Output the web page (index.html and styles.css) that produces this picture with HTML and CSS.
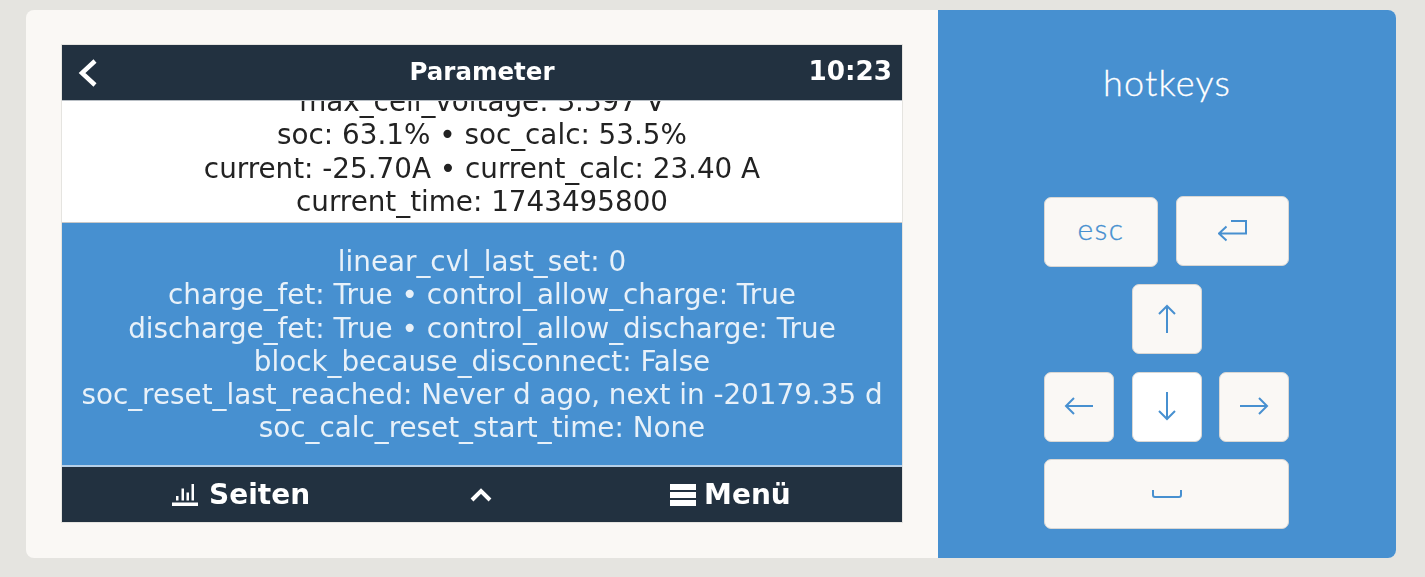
FILE: index.html
```html
<!DOCTYPE html>
<html lang="en">
<head>
    <meta charset="UTF-8">
    <meta name="viewport" content="width=device-width, initial-scale=1.0">
    <title>Remote console</title>
    <link rel="stylesheet" href="styles.css">
</head>
<body>
    <div class="card">
        <div class="console">
            <div class="screen">
                <div class="top-bar">
                    <svg class="back-icon" width="20" height="30" viewBox="0 0 20 30"><path d="M17 3 L4 15 L17 27" fill="none" stroke="#fff" stroke-width="4.500"/></svg>
                    <div class="top-title">Parameter</div>
                    <div class="top-time">10:23</div>
                </div>
                <div class="item">
                    <div>max_cell_voltage: 3.397 V</div>
                    <div>soc: 63.1% • soc_calc: 53.5%</div>
                    <div>current: -25.70A • current_calc: 23.40 A</div>
                    <div>current_time: 1743495800</div>
                </div>
                <div class="item-selected">
                    <div>linear_cvl_last_set: 0</div>
                    <div>charge_fet: True • control_allow_charge: True</div>
                    <div>discharge_fet: True • control_allow_discharge: True</div>
                    <div>block_because_disconnect: False</div>
                    <div>soc_reset_last_reached: Never d ago, next in -20179.35 d</div>
                    <div>soc_calc_reset_start_time: None</div>
                </div>
                <div class="bottom-bar">
                    <div class="nav-pages">
                        <svg width="26" height="24" viewBox="0 0 26 24"><path d="M0 19.500h26V23H0zM4 13h2.500v4.500H4zM9.500 5.500H12v12H9.500zM14.500 9.500H17v8h-2.500zM19.500 1H22v16.500h-2.500z" fill="#fff"/></svg>
                        <span>Seiten</span>
                    </div>
                    <svg class="nav-up" width="22" height="14" viewBox="0 0 22 14"><path d="M2 12 L11 3 L20 12" fill="none" stroke="#fff" stroke-width="4"/></svg>
                    <div class="nav-menu">
                        <svg width="26" height="24" viewBox="0 0 26 24"><path d="M0 1h26v6H0zM0 9h26v6H0zM0 17h26v6H0z" fill="#fff"/></svg>
                        <span>Menü</span>
                    </div>
                </div>
            </div>
        </div>
        <div class="hotkeys">
            <h2>hotkeys</h2>
            <div class="keys">
                <div class="key-row">
                    <button class="key esc-key">esc</button>
                    <button class="key enter-key">
                        <svg width="30" height="24" viewBox="0 0 30 24"><path d="M1 14.500h27V2h-15M8.500 7.500L1 14.500l7.500 7" fill="none" stroke="#4790d0" stroke-width="2"/></svg>
                    </button>
                </div>
                <div class="key-row center-row">
                    <button class="key small-key">
                        <svg width="20" height="30" viewBox="0 0 20 30"><path d="M10 29V2M2 10l8-8 8 8" fill="none" stroke="#4790d0" stroke-width="2"/></svg>
                    </button>
                </div>
                <div class="key-row arrow-row">
                    <button class="key small-key">
                        <svg width="30" height="20" viewBox="0 0 30 20"><path d="M29 10H2M10 2l-8 8 8 8" fill="none" stroke="#4790d0" stroke-width="2"/></svg>
                    </button>
                    <button class="key small-key pressed">
                        <svg width="20" height="30" viewBox="0 0 20 30"><path d="M10 1v27M2 20l8 8 8-8" fill="none" stroke="#4790d0" stroke-width="2"/></svg>
                    </button>
                    <button class="key small-key">
                        <svg width="30" height="20" viewBox="0 0 30 20"><path d="M1 10h27M20 2l8 8-8 8" fill="none" stroke="#4790d0" stroke-width="2"/></svg>
                    </button>
                </div>
                <div class="key-row">
                    <button class="key space-key">
                        <svg width="30" height="10" viewBox="0 0 30 10"><path d="M1 1v5q0 2 2 2h24q2 0 2-2V1" fill="none" stroke="#4790d0" stroke-width="2"/></svg>
                    </button>
                </div>
            </div>
        </div>
    </div>
</body>
</html>
```

FILE: styles.css
```css
html, body {
    height: 100%;
}
body {
    margin: 0;
    padding: 10px 29px 19px 26px;
    box-sizing: border-box;
    background-color: #e5e4e0;
    overflow: hidden;
}
.card {
    display: flex;
    height: 548px;
    border-radius: 8px;
    overflow: hidden;
    background-color: #faf8f5;
}
.console {
    width: 912px;
    box-sizing: border-box;
    padding: 34px 0 0 35px;
}
.screen {
    width: 840px;
    height: 477px;
    display: flex;
    flex-direction: column;
    border: 1px solid #e5e4e0;
    font-family: "DejaVu Sans", sans-serif;
    font-size: 27.8px;
    line-height: 33.25px;
    text-align: center;
    filter: blur(0.5px);
}
.top-bar {
    flex: none;
    height: 55px;
    display: grid;
    grid-template-columns: 1fr auto 1fr;
    align-items: center;
    background-color: #223140;
    color: #fff;
    font-weight: bold;
}
.back-icon {
    margin: 1px 0 0 16px;
}
.top-title {
    padding-bottom: 2px;
    font-size: 24.5px;
}
.top-time {
    text-align: right;
    padding: 0 10px 2px 0;
    font-size: 26.25px;
}
.item {
    flex: none;
    height: 122px;
    box-sizing: border-box;
    display: flex;
    flex-direction: column;
    justify-content: flex-end;
    padding-bottom: 4px;
    overflow: hidden;
    background-color: #fff;
    border-top: 1px solid #b9bfc5;
    color: #222;
    white-space: nowrap;
}
.item-selected {
    flex: none;
    height: 245px;
    box-sizing: border-box;
    padding-top: 22px;
    background-color: #4790d0;
    border-top: 1px solid #c8c8c8;
    border-bottom: 2px solid #b5cfe8;
    color: #e8f1f9;
    white-space: nowrap;
}
.bottom-bar {
    flex: 1;
    display: flex;
    align-items: center;
    padding-left: 110px;
    background-color: #223140;
    color: #fff;
    font-size: 28px;
    font-weight: bold;
}
.nav-pages,
.nav-menu {
    display: flex;
    align-items: center;
}
.nav-pages span {
    margin-left: 11px;
}
.nav-menu span {
    margin-left: 8px;
}
.nav-up {
    margin-left: 160px;
}
.nav-menu {
    margin-left: 178px;
}
.hotkeys {
    flex: 1;
    background-color: #4790d0;
    padding-top: 51px;
}
.hotkeys h2 {
    margin: 0 0 92px;
    text-align: center;
    font-family: Lato, sans-serif;
    font-size: 36px;
    line-height: 43px;
    font-weight: 300;
    letter-spacing: 1.2px;
    color: #fff;
    -webkit-text-stroke: 0.3px #fff;
}
.keys {
    width: 245px;
    margin-left: 106px;
    display: flex;
    flex-direction: column;
    gap: 18px;
}
.key-row {
    display: flex;
    justify-content: space-between;
}
.center-row {
    justify-content: center;
}
.arrow-row {
    margin-bottom: -1px;
}
.arrow-row .key {
    padding-bottom: 3px;
}
.key {
    display: flex;
    align-items: center;
    justify-content: center;
    height: 70px;
    padding: 0;
    box-sizing: border-box;
    border: 1px solid #d9d7d4;
    border-radius: 7px;
    background-color: #faf8f5;
    color: #4790d0;
    font-family: Lato, sans-serif;
    font-size: 30px;
    font-weight: 300;
    letter-spacing: 1.5px;
    line-height: 1;
}
.esc-key {
    width: 114px;
    margin: 1px 0 -1px;
    padding-bottom: 9px;
    -webkit-text-stroke: 0.3px #4790d0;
}
.enter-key {
    width: 113px;
}
.small-key {
    width: 70px;
}
.space-key {
    width: 100%;
}
.pressed {
    background-color: #fff;
}
```
